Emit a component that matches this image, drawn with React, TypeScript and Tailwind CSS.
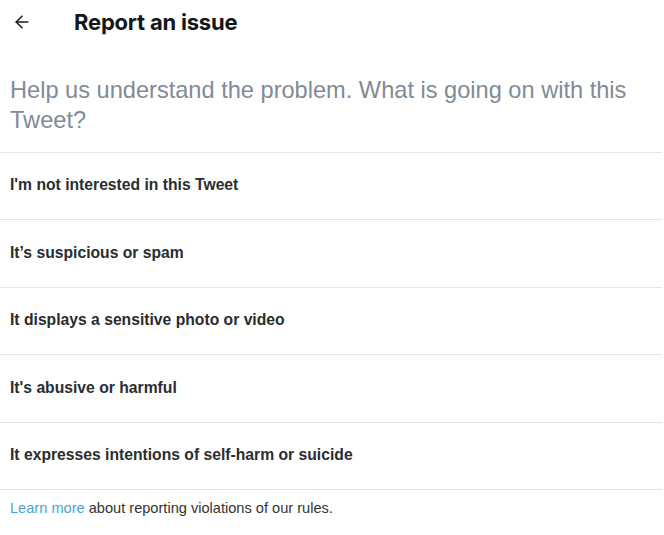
import { ArrowLeft } from 'lucide-react';

const REASONS = [
  "I'm not interested in this Tweet",
  'It’s suspicious or spam',
  'It displays a sensitive photo or video',
  "It's abusive or harmful",
  'It expresses intentions of self-harm or suicide',
];

export default function App() {
  return (
    <div className="w-[662px] min-h-[535px] bg-white font-['Liberation_Sans',Arial,sans-serif]">
      {/* header */}
      <div className="h-[44px] flex items-center">
        <button className="ml-[12px] w-[20px] h-[20px] flex items-center justify-center text-[#1a1a1a]">
          <ArrowLeft size={20} strokeWidth={1.8} />
        </button>
        <h1 className="ml-[42px] font-['Inter',sans-serif] text-[22px] font-bold text-[#14171a] tracking-[-0.2px]">
          Report an issue
        </h1>
      </div>

      {/* question */}
      <p className="px-[10px] pt-[31px] pb-[17px] text-[23.6px] leading-[30px] text-[#7f8b97]">
        Help us understand the problem. What is going on with this Tweet?
      </p>

      {/* options */}
      <div className="border-t border-[#e3e6e8]">
        {REASONS.map(r => (
          <button
            key={r}
            className="w-full h-[67.4px] flex items-center px-[10px] pb-[2px] border-b border-[#e3e6e8] text-left text-[15.7px] font-bold text-[#2a2d30] hover:bg-gray-50"
          >
            {r}
          </button>
        ))}
      </div>

      <p className="px-[10px] pt-[8px] text-[14.6px] leading-[20px] text-[#333]">
        <a className="text-[#4aa3df]">Learn more</a> about reporting violations of our rules.
      </p>
    </div>
  );
}
